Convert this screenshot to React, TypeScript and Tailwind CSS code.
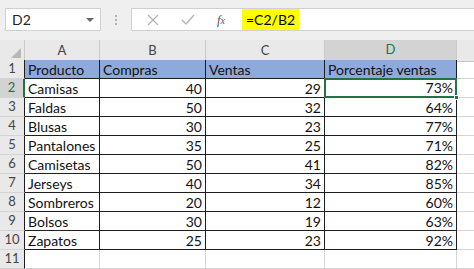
import React from "react";

const rows: [string, number, number, string][] = [
  ["Camisas", 40, 29, "73%"],
  ["Faldas", 50, 32, "64%"],
  ["Blusas", 30, 23, "77%"],
  ["Pantalones", 35, 25, "71%"],
  ["Camisetas", 50, 41, "82%"],
  ["Jerseys", 40, 34, "85%"],
  ["Sombreros", 20, 12, "60%"],
  ["Bolsos", 30, 19, "63%"],
  ["Zapatos", 25, 23, "92%"],
];

const cols = "grid grid-cols-[25px_75px_106px_119px_132px_1fr]";

function RowHead({ n, selected = false }: { n: number; selected?: boolean }) {
  return (
    <div
      className={`h-[19px] flex items-center justify-center text-[13px] border-b border-[#d4d4d4] ${
        selected
          ? "bg-[#d3d3d3] text-[#217346] border-r-2 border-r-[#217346]"
          : "bg-[#e9e9e9] text-[#444] border-r border-r-[#1e1e1e]"
      }`}
    >
      {n}
    </div>
  );
}

function Cell({ children, right = false, className = "" }: { children?: React.ReactNode; right?: boolean; className?: string }) {
  return (
    <div
      className={`h-[19px] leading-[19px] px-[3px] text-[14px] text-[#111] whitespace-nowrap overflow-hidden border-r border-b border-[#1e1e1e] ${
        right ? "text-right" : ""
      } ${className}`}
    >
      {children}
    </div>
  );
}

export default function App() {
  return (
    <div className="w-[474px] h-[269px] overflow-hidden bg-white font-['Lato','Noto_Sans',sans-serif]">
      {/* formula bar */}
      <div className="h-[40px] bg-[#efefef] flex items-start pt-[8px] pl-[5px]">
        <div className="w-[96px] h-[23px] bg-white border border-[#d0d0d0] flex items-center justify-between pl-[6px] pr-[6px]">
          <span className="text-[14px] text-[#222]">D2</span>
          <span className="w-0 h-0 border-l-[4px] border-r-[4px] border-t-[4px] border-l-transparent border-r-transparent border-t-[#666]" />
        </div>
        <div className="w-[30px] h-[23px] flex flex-col items-center justify-center gap-[2px]">
          <span className="w-[2px] h-[2px] bg-[#b0b0b0]" />
          <span className="w-[2px] h-[2px] bg-[#b0b0b0]" />
          <span className="w-[2px] h-[2px] bg-[#b0b0b0]" />
        </div>
        <div className="flex-1 h-[23px] bg-white border border-[#d0d0d0] border-r-0 flex items-center">
          <div className="w-[104px] flex items-center justify-around pl-[4px]">
            <svg width="12" height="12" viewBox="0 0 12 12" className="stroke-[#b4b4b4]" strokeWidth="1.3">
              <path d="M1 1 L11 11 M11 1 L1 11" />
            </svg>
            <svg width="14" height="12" viewBox="0 0 14 12" fill="none" className="stroke-[#b4b4b4]" strokeWidth="1.4">
              <path d="M1 6 L5 10 L13 1" />
            </svg>
            <span className="font-['Liberation_Serif',serif] italic text-[13px] text-[#555]">
              f<span className="text-[10px]">x</span>
            </span>
          </div>
          <div className="ml-[6px] bg-[#ffff00] px-[4px] h-[21px] flex items-center text-[14px] text-black">=C2/B2</div>
        </div>
      </div>

      {/* column headers */}
      <div className={`${cols} h-[20px]`}>
        <div className="bg-[#e9e9e9] border-r border-b border-[#c8c8c8] flex items-end justify-end pr-[3px] pb-[3px]">
          <svg width="10" height="10" viewBox="0 0 10 10">
            <path d="M10 0 L10 10 L0 10 Z" fill="#b8b8b8" />
          </svg>
        </div>
        {["A", "B", "C"].map((c) => (
          <div key={c} className="bg-[#e9e9e9] border-r border-b border-[#c8c8c8] flex items-center justify-center text-[13px] text-[#444]">
            {c}
          </div>
        ))}
        <div className="bg-[#d3d3d3] border-r border-[#c8c8c8] border-b-2 border-b-[#217346] flex items-center justify-center text-[13px] text-[#217346]">
          D
        </div>
        <div className="bg-[#e9e9e9] border-b border-[#c8c8c8]" />
      </div>

      {/* header row */}
      <div className={cols}>
        <RowHead n={1} />
        <Cell className="bg-[#8eaadb]">Producto</Cell>
        <Cell className="bg-[#8eaadb]">Compras</Cell>
        <Cell className="bg-[#8eaadb]">Ventas</Cell>
        <Cell className="bg-[#8eaadb]">Porcentaje ventas</Cell>
        <div className="h-[19px] border-b border-[#d4d4d4]" />
      </div>

      {rows.map(([p, c, v, pct], i) => (
        <div key={p} className={cols}>
          <RowHead n={i + 2} selected={i === 0} />
          <Cell>{p}</Cell>
          <Cell right>{c}</Cell>
          <Cell right>{v}</Cell>
          {i === 0 ? (
            <div className="leading-[15px] px-[2px] text-[14px] text-[#111] text-right border-2 border-[#217346] -ml-px -mt-px h-[20px] w-[133px] relative">
              {pct}
              <span className="absolute -right-[4px] -bottom-[4px] w-[5px] h-[5px] bg-[#217346] border border-white" />
            </div>
          ) : (
            <Cell right>{pct}</Cell>
          )}
          <div className="h-[19px] border-b border-[#d4d4d4]" />
        </div>
      ))}

      <div className={cols}>
        <RowHead n={11} />
        <div className="h-[19px] border-r border-b border-[#d4d4d4]" />
        <div className="h-[19px] border-r border-b border-[#d4d4d4]" />
        <div className="h-[19px] border-r border-b border-[#d4d4d4]" />
        <div className="h-[19px] border-r border-b border-[#d4d4d4]" />
        <div className="h-[19px] border-b border-[#d4d4d4]" />
      </div>
    </div>
  );
}
